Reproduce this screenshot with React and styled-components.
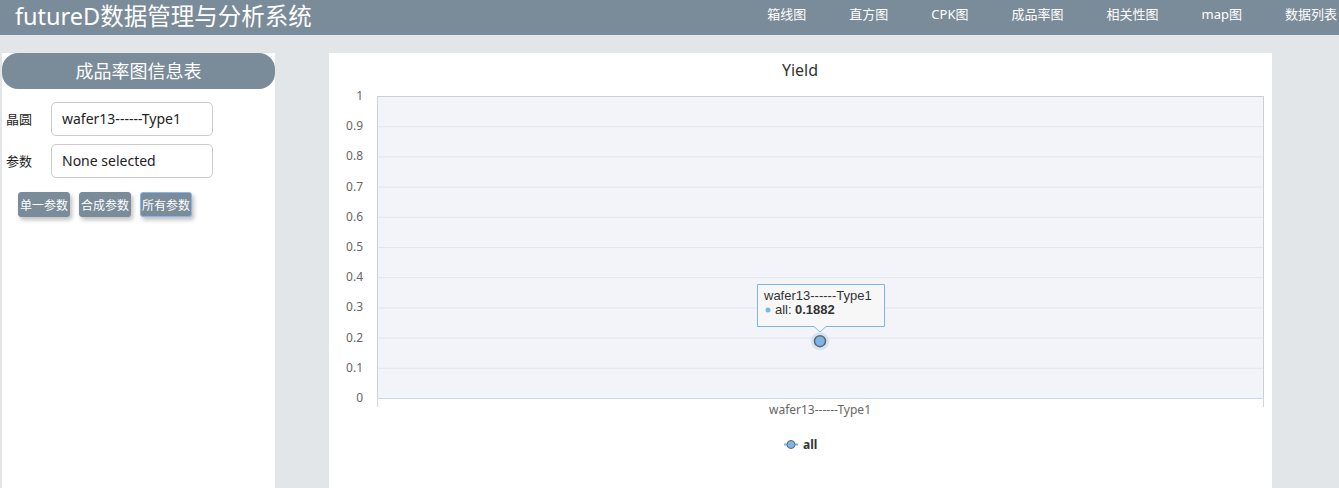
import React from 'react';
import styled, { createGlobalStyle } from 'styled-components';

const GlobalStyle = createGlobalStyle`
    body {
        margin: 0;
        background: #e3e6e9;
        font-family: "Noto Sans", "Noto Sans CJK SC", sans-serif;
        overflow: hidden;
    }
`;

const navItems = ['箱线图', '直方图', 'CPK图', '成品率图', '相关性图', 'map图', '数据列表'];
const yTicks = [1, 0.9, 0.8, 0.7, 0.6, 0.5, 0.4, 0.3, 0.2, 0.1, 0];

// plot area, in chart-panel coordinates
const PLOT = { left: 48, right: 935, top: 43, bottom: 345 };
const value = 0.1882;

const YieldChart = () => {
    const h = PLOT.bottom - PLOT.top;
    const yOf = (v) => PLOT.bottom - v * h;
    const px = 491;
    const py = yOf(value);

    return (
        <ChartSvg width="943" height="440">
            <text x="471" y="23" textAnchor="middle" fontSize="16" fill="#333">Yield</text>
            <rect x={PLOT.left} y={PLOT.top} width={PLOT.right - PLOT.left} height={h} fill="#f3f4f9" />
            {yTicks.map((t) => (
                <g key={t}>
                    <line x1={PLOT.left} x2={PLOT.right} y1={yOf(t) + 0.5} y2={yOf(t) + 0.5} stroke="#e4e5ea" />
                    <text x="34" y={yOf(t) + 4} textAnchor="end" fontSize="12" fill="#666">{t}</text>
                </g>
            ))}
            <line x1={PLOT.left} x2={PLOT.right} y1={PLOT.top + 0.5} y2={PLOT.top + 0.5} stroke="#cfcfcf" />
            <line x1={PLOT.left + 0.5} x2={PLOT.left + 0.5} y1={PLOT.top} y2={PLOT.bottom} stroke="#cfcfcf" />
            <line x1={PLOT.right - 0.5} x2={PLOT.right - 0.5} y1={PLOT.top} y2={PLOT.bottom} stroke="#cfcfcf" />
            <line x1={PLOT.left} x2={PLOT.right} y1={PLOT.bottom + 0.5} y2={PLOT.bottom + 0.5} stroke="#ccd6eb" />
            <line x1={PLOT.left + 0.5} x2={PLOT.left + 0.5} y1={PLOT.bottom} y2={PLOT.bottom + 9} stroke="#ccd6eb" />
            <line x1={PLOT.right - 0.5} x2={PLOT.right - 0.5} y1={PLOT.bottom} y2={PLOT.bottom + 9} stroke="#ccd6eb" />
            <text x={px} y="361" textAnchor="middle" fontSize="12" fill="#666">wafer13------Type1</text>

            <circle cx={px} cy={py} r="9" fill="#7cb5ec" opacity="0.25" />
            <circle cx={px} cy={py} r="5.5" fill="#7cb5ec" stroke="#666" strokeWidth="1.5" />

            <path
                d={`M428.5 231.5 H555.5 V273.5 H${px + 6} L${px} 279 L${px - 6} 273.5 H428.5 Z`}
                fill="rgba(247,247,247,0.9)"
                stroke="#7cb5ec"
            />
            <g fontFamily='"Liberation Sans", Arial, sans-serif' fontSize="13" fill="#333">
                <text x="435" y="247">wafer13------Type1</text>
                <circle cx="439" cy="257" r="2.5" fill="#7cb5ec" />
                <text x="446" y="261">all:</text>
                <text x="466" y="261" fontWeight="bold">{value}</text>
            </g>

            <line x1="455" x2="469" y1="391.5" y2="391.5" stroke="#7cb5ec" strokeWidth="2" />
            <circle cx="462" cy="391.5" r="4" fill="#7cb5ec" stroke="#666" />
            <text x="474" y="396" fontSize="12" fontWeight="bold" fill="#333">all</text>
        </ChartSvg>
    );
};

const App = () => {
    return (
        <>
            <GlobalStyle />
            <Header>
                <Brand>futureD数据管理与分析系统</Brand>
                <Nav>
                    {navItems.map((n) => (
                        <NavItem key={n}>{n}</NavItem>
                    ))}
                </Nav>
            </Header>
            <Main>
                <Sidebar>
                    <SideTitle>成品率图信息表</SideTitle>
                    <FieldRow>
                        <Label>晶圆</Label>
                        <Select>wafer13------Type1</Select>
                    </FieldRow>
                    <FieldRow>
                        <Label>参数</Label>
                        <Select>None selected</Select>
                    </FieldRow>
                    <ButtonRow>
                        <ActionButton>单一参数</ActionButton>
                        <ActionButton>合成参数</ActionButton>
                        <ActionButton $focused>所有参数</ActionButton>
                    </ButtonRow>
                </Sidebar>
                <ChartPanel>
                    <YieldChart />
                </ChartPanel>
            </Main>
        </>
    );
};

export default App;

const Header = styled.header`
    display: flex;
    align-items: center;
    justify-content: space-between;
    height: 35px;
    background: #7a8b99;
    color: #fff;
`;

const Brand = styled.div`
    font-size: 23.5px;
    padding-left: 15px;
    line-height: 28px;
    margin-top: -3px;
`;

const Nav = styled.nav`
    display: flex;
    gap: 43px;
    margin-right: 2px;
    margin-top: -9px;
`;

const NavItem = styled.span`
    font-size: 13px;
    white-space: nowrap;
`;

const Main = styled.div`
    display: flex;
    gap: 54px;
    padding: 18px 0 0 2px;
`;

const Sidebar = styled.aside`
    width: 273px;
    height: 440px;
    background: #fff;
    display: flex;
    flex-direction: column;
`;

const SideTitle = styled.div`
    height: 36px;
    line-height: 36px;
    background: #7a8b99;
    color: #fff;
    font-size: 18px;
    text-align: center;
    border-radius: 16px;
    margin-bottom: 13px;
`;

const FieldRow = styled.div`
    display: flex;
    align-items: center;
    margin-bottom: 8px;
    padding-left: 4px;
`;

const Label = styled.label`
    font-size: 13px;
    color: #222;
    width: 45px;
    margin-top: -2px;
`;

const Select = styled.div`
    width: 150px;
    height: 32px;
    line-height: 32px;
    border: 1px solid #ccc;
    border-radius: 5px;
    padding-left: 10px;
    font-size: 14px;
    color: #222;
`;

const ButtonRow = styled.div`
    display: flex;
    gap: 9px;
    padding-left: 16px;
    margin-top: 6px;
`;

const ActionButton = styled.button`
    height: 25px;
    padding: 0 1px;
    border: 1px solid ${(p) => (p.$focused ? '#8ab4f0' : '#7a8b99')};
    border-radius: 3px;
    background: #7a8b99;
    color: #fff;
    font-family: "Noto Sans CJK SC", sans-serif;
    font-size: 12px;
    box-shadow: 2px 3px 4px rgba(0, 0, 0, 0.25);
    cursor: pointer;
`;

const ChartPanel = styled.section`
    width: 943px;
    height: 440px;
    background: #fff;
`;

const ChartSvg = styled.svg`
    display: block;
    font-family: "Noto Sans", "Liberation Sans", sans-serif;
`;
